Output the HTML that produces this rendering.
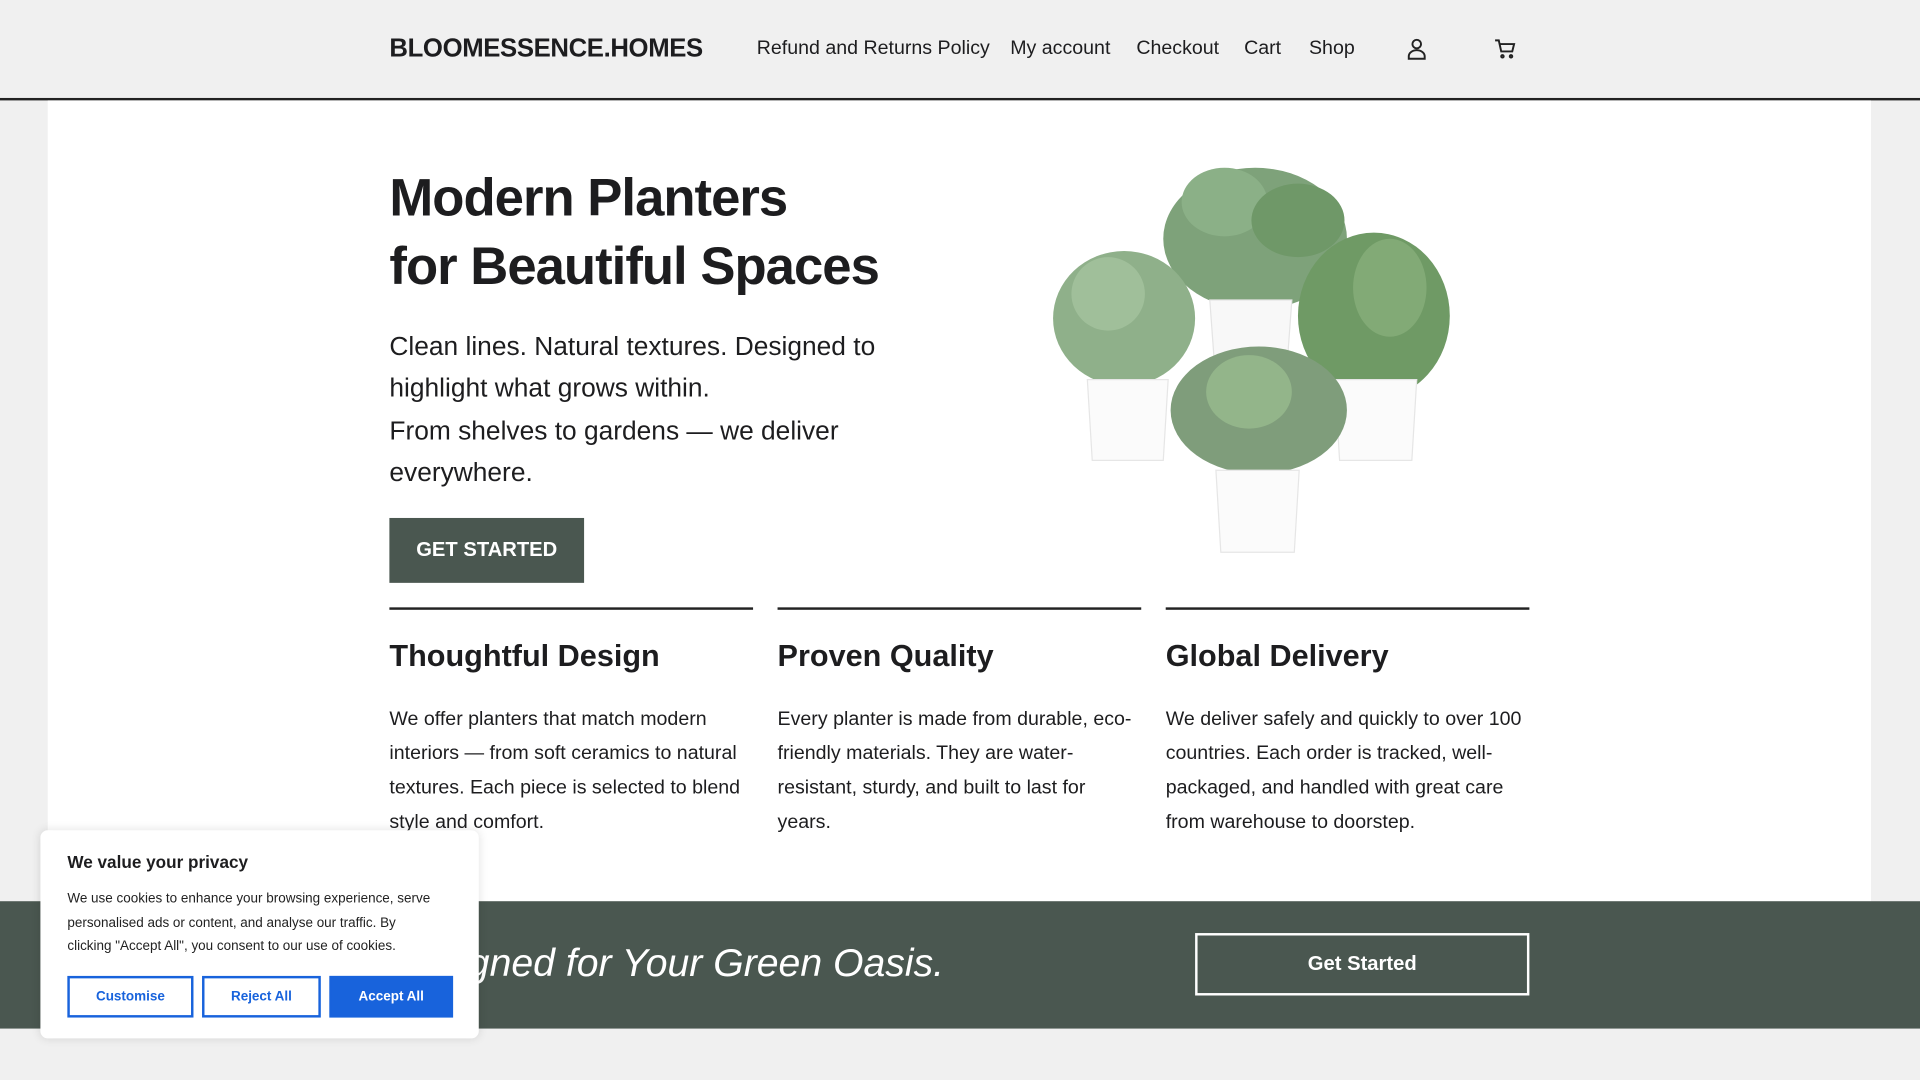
<!DOCTYPE html>
<html><head><meta charset="utf-8"><style>
html,body{margin:0;padding:0;width:1920px;height:1080px;overflow:hidden;background:#f0f0f0}
#w{position:absolute;left:0;top:0;width:1568px;height:882px;transform:scale(1.22449);transform-origin:0 0;font-family:"Liberation Sans",sans-serif;color:#1d1d1f}
.a{position:absolute;white-space:nowrap}
.hdr{left:0;top:0;width:1568px;height:80px;border-bottom:2px solid #222;background:#f0f0f0}
.nav{font-size:16px;top:31px}
.box{left:39px;top:82px;width:1489px;height:654px;background:#fff}
h1{margin:0;position:absolute;left:318px;top:134px;font-size:43px;line-height:56px;font-weight:bold;letter-spacing:-0.8px}
.p{left:318px;top:266px;font-size:21.5px;line-height:34.3px;white-space:normal;width:440px}
.btn{left:318px;top:423px;width:159px;height:53px;background:#4a5750;color:#fff;font-weight:bold;font-size:16.5px;text-align:center;line-height:53px}
.col{top:496px;width:297px;border-top:2px solid #222}
.col h3{margin:0;position:absolute;top:24px;font-size:25px;font-weight:bold;white-space:nowrap}
.col p{margin:0;position:absolute;top:76px;font-size:16px;line-height:28px;width:297px;white-space:normal}
.band{left:0;top:736px;width:1568px;height:104px;background:#4a5750}
.ck{left:33px;top:678px;width:358px;height:170px;background:#fff;border-radius:6px;box-shadow:0 0 8px rgba(0,0,0,.12)}
.cb{position:absolute;top:119px;height:34px;border:2px solid #1863dc;box-sizing:border-box;color:#1863dc;font-size:11px;font-weight:bold;text-align:center;line-height:30px}
</style></head><body><div id="w">
<div class="a hdr"></div>
<div class="a" style="left:318px;top:28px;font-size:21px;font-weight:bold;letter-spacing:-0.3px">BLOOMESSENCE.HOMES</div>
<div class="a nav" style="left:618px">Refund and Returns Policy</div>
<div class="a nav" style="left:825px">My account</div>
<div class="a nav" style="left:928px">Checkout</div>
<div class="a nav" style="left:1016px">Cart</div>
<div class="a nav" style="left:1069px">Shop</div>
<svg class="a" style="left:1148px;top:30px" width="18" height="20" viewBox="0 0 18 20" fill="none" stroke="#222" stroke-width="1.6"><circle cx="9" cy="6" r="3.5"/><path d="M2.5 18v-2a6.5 5 0 0 1 13 0v2z"/></svg>
<svg class="a" style="left:1220px;top:31px" width="18" height="18" viewBox="0 0 18 18" fill="none" stroke="#222" stroke-width="1.6"><path d="M1 2h3l2 9h9l1.5-6H5"/><circle cx="7" cy="15" r="1"/><circle cx="14" cy="15" r="1"/></svg>
<div class="a box"></div>
<h1>Modern Planters<br>for Beautiful Spaces</h1>
<div class="a p">Clean lines. Natural textures. Designed to highlight what grows within.<br>From shelves to gardens — we deliver everywhere.</div>
<div class="a btn">GET STARTED</div>
<svg class="a" style="left:850px;top:130px" width="345" height="330" viewBox="850 130 345 330">
<g fill="#7ea27a"><ellipse cx="1025" cy="195" rx="75" ry="58"/><ellipse cx="1000" cy="165" rx="35" ry="28" fill="#8bb087"/><ellipse cx="1060" cy="180" rx="38" ry="30" fill="#6f9868"/></g>
<path d="M988 245h67l-4 55h-59z" fill="#f8f8f8" stroke="#e4e4e4"/>
<g><ellipse cx="918" cy="260" rx="58" ry="55" fill="#8fb08a"/><ellipse cx="905" cy="240" rx="30" ry="30" fill="#a0bf9a"/><ellipse cx="1122" cy="258" rx="62" ry="68" fill="#6f9a65"/><ellipse cx="1135" cy="235" rx="30" ry="40" fill="#82aa76"/></g>
<path d="M888 310h66l-4 66h-58z" fill="#fbfbfb" stroke="#e6e6e6"/>
<path d="M1090 310h67l-4 66h-59z" fill="#fbfbfb" stroke="#e6e6e6"/>
<ellipse cx="1028" cy="335" rx="72" ry="52" fill="#7f9d7b"/><ellipse cx="1020" cy="320" rx="35" ry="30" fill="#93b58a"/>
<path d="M993 384h68l-4 67h-60z" fill="#fbfbfb" stroke="#e6e6e6"/>
</svg>
<div class="a col" style="left:318px"><h3>Thoughtful Design</h3><p>We offer planters that match modern interiors — from soft ceramics to natural textures. Each piece is selected to blend style and comfort.</p></div>
<div class="a col" style="left:635px"><h3>Proven Quality</h3><p>Every planter is made from durable, eco-friendly materials. They are water-resistant, sturdy, and built to last for years.</p></div>
<div class="a col" style="left:952px"><h3>Global Delivery</h3><p>We deliver safely and quickly to over 100 countries. Each order is tracked, well-packaged, and handled with great care from warehouse to doorstep.</p></div>
<div class="a band"></div>
<div class="a" style="left:318px;top:768px;font-size:32px;font-style:italic;color:#fff">Designed for Your Green Oasis.</div>
<div class="a" style="left:976px;top:762px;width:273px;height:51px;border:2px solid #fff;box-sizing:border-box;color:#fff;font-weight:bold;font-size:16.5px;text-align:center;line-height:47px">Get Started</div>
<div class="a ck">
<div class="a" style="left:22px;top:18px;font-size:14px;font-weight:bold">We value your privacy</div>
<div class="a" style="left:22px;top:47px;font-size:11px;line-height:19.7px;white-space:normal;width:300px;color:#222">We use cookies to enhance your browsing experience, serve personalised ads or content, and analyse our traffic. By clicking "Accept All", you consent to our use of cookies.</div>
<div class="cb" style="left:22px;width:103px">Customise</div>
<div class="cb" style="left:132px;width:97px">Reject All</div>
<div class="cb" style="left:236px;width:101px;background:#1863dc;color:#fff">Accept All</div>
</div>
</div></body></html>
